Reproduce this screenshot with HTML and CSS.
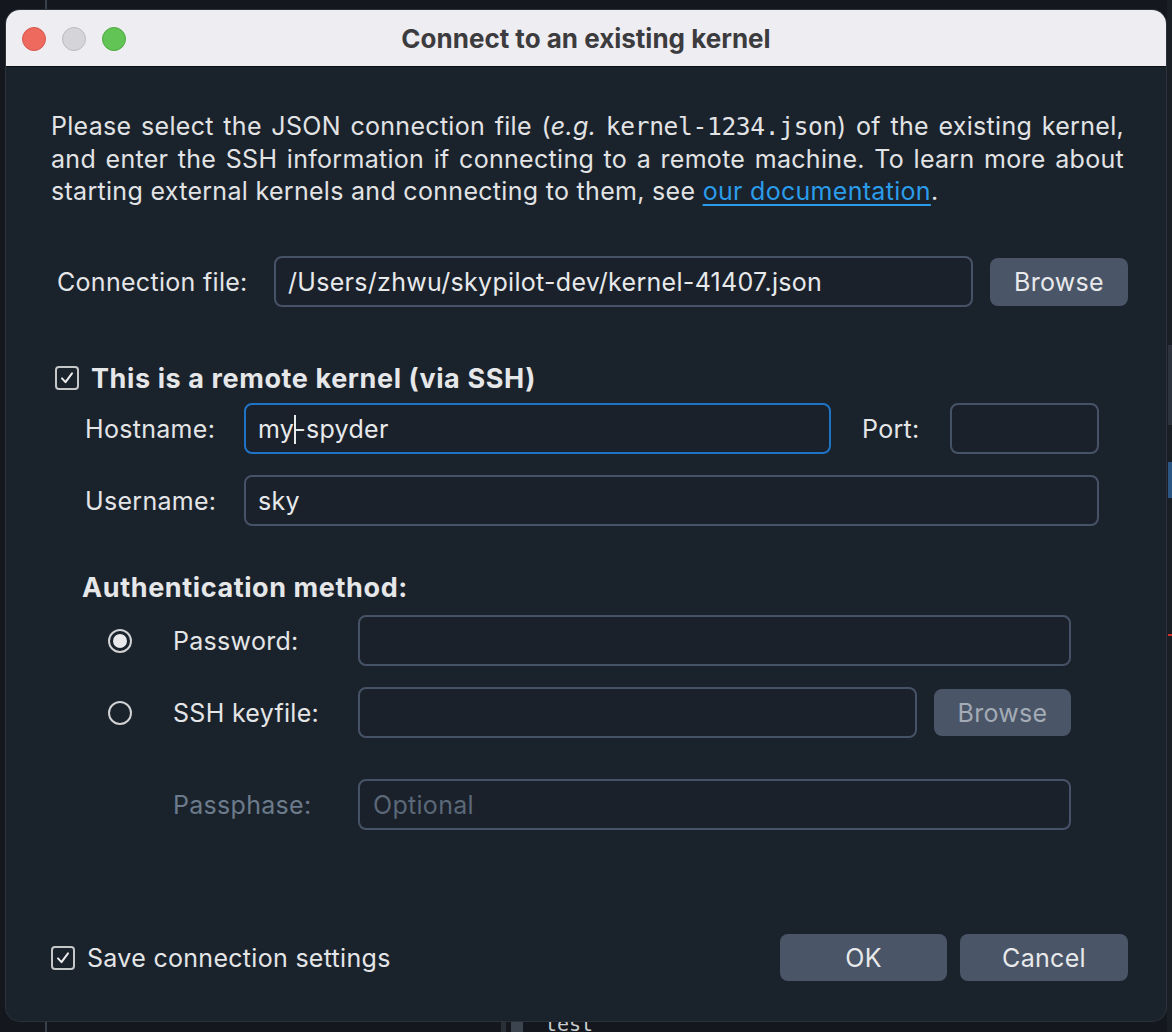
FILE: index.html
```html
<!DOCTYPE html>
<html lang="en">
<head>
<meta charset="utf-8">
<title>Connect to an existing kernel</title>
<link rel="stylesheet" href="styles.css">
</head>
<body>
<div class="desk">
  <div class="bg-line bg-line-top"></div>
  <div class="bg-line bg-line-bottom"></div>
  <div class="bg-bar bg-bar-a"></div>
  <div class="bg-bar bg-bar-b"></div>
  <div class="bg-text">test</div>
  <div class="edge">
    <div class="edge-seg edge-gray"></div>
    <div class="edge-seg edge-blue"></div>
    <div class="edge-seg edge-red"></div>
  </div>

  <div class="window">
    <div class="titlebar">
      <div class="lights">
        <span class="light red"></span>
        <span class="light gray"></span>
        <span class="light green"></span>
      </div>
      <div class="title">Connect to an existing kernel</div>
      <div></div>
    </div>

    <div class="content">
      <p class="intro">
        <span class="jline">Please select the JSON connection file (<em>e.g.</em> <code>kernel-1234.json</code>) of the existing kernel,</span>
        <span class="jline">and enter the SSH information if connecting to a remote machine. To learn more about</span>
        <span class="lline">starting external kernels and connecting to them, see <a href="#">our documentation</a>.</span>
      </p>

      <div class="row conn-row">
        <label class="conn-label">Connection file:</label>
        <div class="field grow"><span class="val">/Users/zhwu/skypilot-dev/kernel-41407.json</span></div>
        <button class="btn browse">Browse</button>
      </div>

      <div class="check-row remote-check">
        <span class="checkbox"><svg viewBox="0 0 24 24" width="24" height="24"><path d="M6 12.5 L10.2 17 L18 6.5" fill="none" stroke="#ececec" stroke-width="2.4" stroke-linecap="round" stroke-linejoin="round"/></svg></span>
        <span class="bold-label">This is a remote kernel (via SSH)</span>
      </div>

      <div class="row ssh-row host-row">
        <label class="ssh-label">Hostname:</label>
        <div class="field focus host-field"><span class="val">my<span class="caret"></span>-spyder</span></div>
        <label class="port-label">Port:</label>
        <div class="field port-field"></div>
      </div>

      <div class="row ssh-row user-row">
        <label class="ssh-label">Username:</label>
        <div class="field grow"><span class="val">sky</span></div>
      </div>

      <div class="auth-title">Authentication method:</div>

      <div class="row auth-row pw-row">
        <span class="radio checked"><span class="dot"></span></span>
        <label class="auth-label">Password:</label>
        <div class="field grow"></div>
      </div>

      <div class="row auth-row key-row">
        <span class="radio"></span>
        <label class="auth-label">SSH keyfile:</label>
        <div class="field grow"></div>
        <button class="btn browse disabled">Browse</button>
      </div>

      <div class="row auth-row pass-row">
        <span class="radio-space"></span>
        <label class="auth-label dim">Passphase:</label>
        <div class="field grow"><span class="placeholder">Optional</span></div>
      </div>

      <div class="footer">
        <div class="check-row save-check">
          <span class="checkbox"><svg viewBox="0 0 24 24" width="24" height="24"><path d="M6 12.5 L10.2 17 L18 6.5" fill="none" stroke="#ececec" stroke-width="2.4" stroke-linecap="round" stroke-linejoin="round"/></svg></span>
          <span class="save-label">Save connection settings</span>
        </div>
        <div class="buttons">
          <button class="btn action">OK</button>
          <button class="btn action">Cancel</button>
        </div>
      </div>
    </div>
  </div>
</div>
</body>
</html>
```

FILE: styles.css
```css
* { box-sizing: border-box; }

html, body {
  margin: 0;
  padding: 0;
  background: #14181e;
}

body {
  width: 1172px;
  height: 1032px;
  overflow: hidden;
  font-family: "Inter", "Noto Sans", sans-serif;
  color: #e4e5e7;
}

.desk {
  position: relative;
  width: 1172px;
  height: 1032px;
  padding: 10px 0 0 6px;
}

/* faint background app details peeking around the dialog */
.bg-line {
  position: absolute;
  width: 2px;
  background: #3a404a;
}
.bg-line-top { left: 45px; top: 0; height: 10px; }
.bg-line-bottom { left: 45px; top: 1021px; height: 11px; }
.bg-bar { position: absolute; top: 1021px; height: 11px; }
.bg-bar-a { left: 501px; width: 5px; background: #2a3038; }
.bg-bar-b { left: 511px; width: 12px; background: #3c4450; }
.bg-text {
  position: absolute;
  left: 545px;
  top: 1012px;
  line-height: 24px;
  font-family: "DejaVu Sans Mono", monospace;
  font-size: 20px;
  color: #c9ccd0;
}
.edge {
  position: absolute;
  left: 1167px;
  top: 0;
  width: 5px;
  height: 1032px;
  background: #1a1f26;
}
.edge-seg { position: absolute; left: 1px; width: 4px; }
.edge-gray { top: 345px; height: 80px; background: #2c333c; }
.edge-blue { top: 462px; height: 36px; background: #2b5684; }
.edge-red { top: 634px; height: 2px; background: #d0312d; }

.window {
  position: relative;
  width: 1160px;
  height: 1011px;
  border-radius: 14px;
  overflow: hidden;
  display: flex;
  flex-direction: column;
  background: #1a222c;
  box-shadow: 0 0 0 1px #2c323b;
}

.titlebar {
  height: 57px;
  flex: none;
  background: #eeedf2;
  border-bottom: 1px solid #0d0f12;
  display: grid;
  grid-template-columns: 1fr auto 1fr;
  align-items: center;
}

.lights {
  display: flex;
  gap: 16px;
  padding-left: 16px;
  padding-top: 1px;
}

.light {
  width: 24px;
  height: 24px;
  border-radius: 50%;
  display: block;
}
.light.red { background: #ee6a5f; border: 1px solid #d4574c; }
.light.gray { background: #d5d4d9; border: 1px solid #bcbbc0; }
.light.green { background: #61c454; border: 1px solid #4faa42; }

.title {
  font-weight: 700;
  font-size: 26px;
  color: #3c3c3f;
}

.content {
  flex: 1;
  display: flex;
  flex-direction: column;
  padding: 43px 42px 40px 45px;
}

.intro {
  margin: 0;
  font-size: 25px;
  letter-spacing: 0.3px;
  line-height: 32px;
  color: #e2e3e5;
}
.intro .jline {
  display: block;
  text-align: justify;
  text-align-last: justify;
}
.intro .lline { display: block; }
.intro em { font-style: italic; }
.intro code {
  font-family: "DejaVu Sans Mono", monospace;
  font-size: 24.5px;
  letter-spacing: -0.3px;
}
.intro a {
  color: #2b9cea;
  text-decoration: underline;
  text-decoration-thickness: 2px;
  text-underline-offset: 4px;
}

.row {
  display: flex;
  align-items: center;
  height: 51px;
}

label, .save-label {
  font-size: 25px;
  letter-spacing: 0.3px;
}

.field {
  height: 51px;
  border: 2px solid #465367;
  border-radius: 8px;
  background: #1a212b;
  display: flex;
  align-items: center;
  padding: 0 12px;
  font-size: 25px;
  letter-spacing: 0.3px;
  color: #e8e9eb;
}
.field.grow { flex: 1; }
.field.focus { border-color: #1f73c4; }

.caret {
  display: inline-block;
  width: 2px;
  height: 29px;
  background: #e8e9eb;
  vertical-align: -6px;
  margin-right: -2px;
}

.placeholder { color: #5b6878; }

.btn {
  font-family: "Inter", "Noto Sans", sans-serif;
  font-size: 25px;
  letter-spacing: 0.3px;
  color: #e8e9eb;
  background: #4a5567;
  border: none;
  border-radius: 8px;
  padding: 0;
}
.btn.browse { width: 138px; height: 48px; }
.btn.disabled { color: #a3abb6; width: 137px; height: 47px; }

/* connection file */
.conn-row { margin-top: 49px; gap: 17px; margin-right: -4px; }
.conn-label { padding-left: 6px; flex: none; margin-right: -17px; width: 223px; }

/* remote checkbox */
.check-row {
  display: flex;
  align-items: center;
  gap: 12px;
}
.remote-check { margin-top: 57px; height: 28px; padding-left: 4px; }
.checkbox {
  width: 24px;
  height: 24px;
  border: 2px solid #c6c7c9;
  border-radius: 4px;
  display: flex;
  align-items: center;
  justify-content: center;
  flex: none;
}
.checkbox svg { width: 22px; height: 22px; }
.bold-label {
  font-size: 27px;
  letter-spacing: 0.6px;
  font-weight: 700;
  color: #e6e7e9;
}

/* ssh rows */
.ssh-row { padding-left: 34px; padding-right: 25px; }
.ssh-label { width: 159px; flex: none; }
.host-row { margin-top: 11px; }
.host-field { width: 587px; flex: none; }
.port-label { margin-left: 31px; width: 88px; flex: none; }
.port-field { flex: 1; }
.user-row { margin-top: 21px; }

/* auth */
.auth-title {
  margin-top: 47px;
  height: 30px;
  line-height: 30px;
  padding-left: 31px;
  font-size: 27px;
  letter-spacing: 0.6px;
  font-weight: 700;
  color: #e6e7e9;
}
.auth-row { padding-left: 57px; padding-right: 53px; }
.radio, .radio-space {
  width: 24px;
  height: 24px;
  flex: none;
  margin-right: 41px;
}
.radio {
  border: 2px solid #cfd0d2;
  border-radius: 50%;
  display: flex;
  align-items: center;
  justify-content: center;
}
.radio .dot {
  width: 14px;
  height: 14px;
  border-radius: 50%;
  background: #e9e9eb;
}
.auth-label { width: 185px; flex: none; }
.auth-label.dim { color: #6c7b8b; }
.pw-row { margin-top: 12px; }
.key-row { margin-top: 21px; gap: 0; }
.key-row .btn { margin-left: 17px; }
.pass-row { margin-top: 41px; }
.pass-row .field { padding-left: 13px; }

/* footer */
.footer {
  margin-top: auto;
  margin-right: -4px;
  display: flex;
  align-items: center;
  justify-content: space-between;
  height: 47px;
}
.save-check { height: 28px; }
.save-label { color: #e4e5e7; }
.buttons { display: flex; gap: 13px; }
.btn.action { width: 167px; height: 47px; }
.buttons .btn.action:last-child { width: 168px; }
```
